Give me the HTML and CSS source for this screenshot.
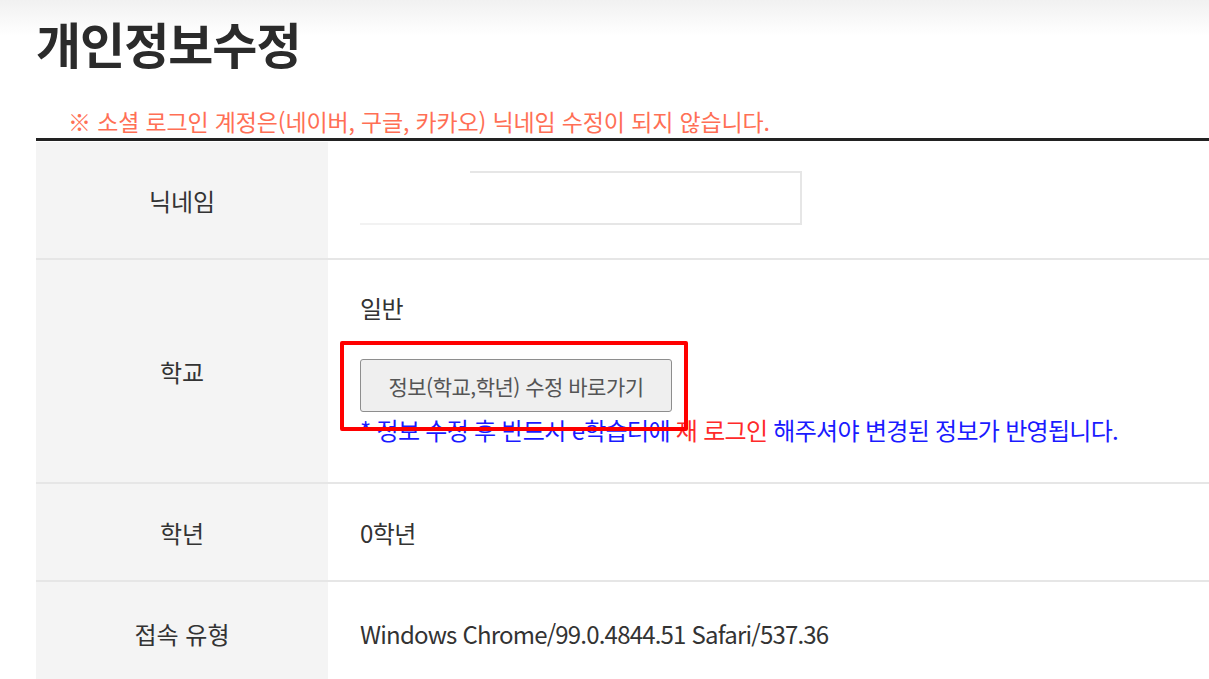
FILE: index.html
```html
<!DOCTYPE html>
<html lang="ko">
<head>
    <meta charset="UTF-8">
    <meta name="viewport" content="width=device-width, initial-scale=1.0">
    <title>개인정보수정</title>
    <link rel="stylesheet" href="styles.css">
</head>
<body>

    <!-- Top fade -->
    <div class="top-fade"></div>

    <div class="page">
        <h1 class="title">개인정보수정</h1>
        <p class="notice">※ 소셜 로그인 계정은(네이버, 구글, 카카오) 닉네임 수정이 되지 않습니다.</p>

        <!-- Info table -->
        <div class="info-table">
            <div class="row row-nick">
                <div class="label">닉네임</div>
                <div class="value">
                    <div class="input-wrap">
                        <input type="text" class="nick-input">
                        <div class="mask"></div>
                    </div>
                </div>
            </div>

            <div class="row row-school">
                <div class="label">학교</div>
                <div class="value school-value">
                    <div class="school-name">일반</div>
                    <div class="btn-wrap">
                        <button class="btn-edit">정보(학교,학년) 수정 바로가기</button>
                        <div class="highlight"></div>
                    </div>
                    <div class="guide">* 정보 수정 후 반드시 e학습터에 <span class="red">재 로그인</span> 해주셔야 변경된 정보가 반영됩니다.</div>
                </div>
            </div>

            <div class="row row-grade">
                <div class="label">학년</div>
                <div class="value">0학년</div>
            </div>

            <div class="row row-agent">
                <div class="label">접속 유형</div>
                <div class="value agent">Windows Chrome/99.0.4844.51 Safari/537.36</div>
            </div>
        </div>
    </div>

</body>
</html>
```

FILE: styles.css
```css
body, html {
    margin: 0;
    padding: 0;
    height: 100%;
    background-color: #ffffff;
    font-family: "Noto Sans CJK KR", "Noto Sans", sans-serif;
    color: #333;
    overflow: hidden;
}

/* Top fade band */
.top-fade {
    height: 36px;
    background: linear-gradient(#f1f1f1, #ffffff);
    margin-bottom: -36px;
}

.page {
    padding-left: 36px;
}

/* Title */
.title {
    margin: 0;
    padding-top: 10px;
    font-size: 49px;
    font-weight: 700;
    line-height: 66px;
    color: #2b2b2b;
    letter-spacing: -1px;
}

.notice {
    margin: 0;
    padding: 30px 0 0 32px;
    height: 32px;
    font-size: 23px;
    line-height: 30px;
    color: #ff6f55;
    letter-spacing: -0.15px;
}

/* Table */
.info-table {
    border-top: 3px solid #222;
    padding-top: 1px;
}

.row {
    display: flex;
    border-bottom: 2px solid #e6e6e6;
}

.label {
    width: 292px;
    flex-shrink: 0;
    background-color: #f4f4f4;
    display: flex;
    justify-content: center;
    align-items: center;
    font-size: 24px;
    color: #333;
}

.value {
    flex: 1;
    display: flex;
    align-items: center;
    padding-left: 32px;
    font-size: 24px;
    color: #333;
    letter-spacing: -0.6px;
}

.value.agent {
    letter-spacing: -0.8px;
}

.row-nick { height: 116px; }
.row-school { height: 222px; }
.row-grade { height: 96px; }
.row-agent { height: 102px; border-bottom: none; }

/* Nickname input */
.input-wrap {
    position: relative;
    margin-top: -4px;
}

.nick-input {
    display: block;
    width: 442px;
    height: 54px;
    box-sizing: border-box;
    border: 2px solid #e6e6e6;
    background: #fff;
}

.mask {
    position: absolute;
    left: 0;
    top: 0;
    width: 110px;
    height: 52px;
    background: #fff;
    border-bottom: 2px solid #f2f2f2;
}

/* School cell */
.school-value {
    flex-direction: column;
    align-items: flex-start;
    justify-content: flex-start;
    padding-top: 33px;
    box-sizing: border-box;
}

.school-name {
    line-height: 30px;
}

.btn-wrap {
    position: relative;
    margin-top: 36px;
}

.btn-edit {
    display: block;
    width: 312px;
    height: 53px;
    background-color: #efefef;
    border: 1px solid #8e8e8e;
    border-radius: 3px;
    font-family: inherit;
    font-size: 21px;
    color: #555;
    letter-spacing: -0.5px;
}

.highlight {
    position: absolute;
    left: -20px;
    top: -18px;
    width: 340px;
    height: 82px;
    border: 4px solid #ff0000;
    border-radius: 2px;
}

.guide {
    margin-top: 3px;
    font-size: 24px;
    line-height: 30px;
    color: #1a1aff;
    letter-spacing: -0.7px;
}

.guide .red {
    color: #ff2a2a;
}
```
